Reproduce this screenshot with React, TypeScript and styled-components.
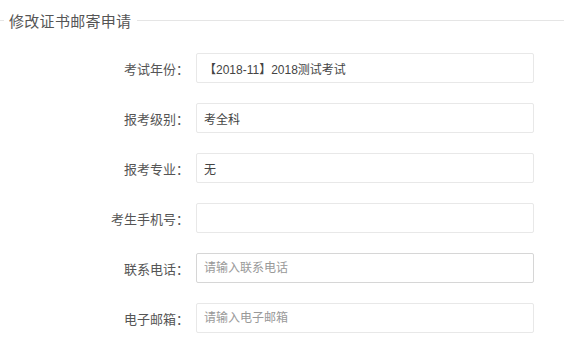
import React from "react";
import styled, { createGlobalStyle } from "styled-components";

const GlobalStyle = createGlobalStyle`
  html, body {
    margin: 0;
    padding: 0;
    background: #fff;
  }
  body {
    font-family: "Liberation Sans", "Noto Sans CJK SC", sans-serif;
    color: #555;
  }
`;

type Field = {
  label: string;
  value?: string;
  placeholder?: string;
  active?: boolean;
};

const FIELDS: Field[] = [
  { label: "考试年份", value: "【2018-11】2018测试考试" },
  { label: "报考级别", value: "考全科" },
  { label: "报考专业", value: "无" },
  { label: "考生手机号", value: "" },
  { label: "联系电话", placeholder: "请输入联系电话", active: true },
  { label: "电子邮箱", placeholder: "请输入电子邮箱" },
];

const App: React.FC = () => {
  return (
    <Page>
      <GlobalStyle />
      <Section>
        <Legend>修改证书邮寄申请</Legend>
        <Form>
          {FIELDS.map((f) => (
            <Row key={f.label}>
              <Label>{f.label}：</Label>
              <Input
                $active={f.active}
                defaultValue={f.value}
                placeholder={f.placeholder}
                readOnly={f.value !== undefined && f.value !== ""}
              />
            </Row>
          ))}
        </Form>
      </Section>
    </Page>
  );
};

const Page = styled.div`
  width: 564px;
  height: 345px;
  overflow: hidden;
  padding-top: 10px;
  box-sizing: border-box;
`;

const Section = styled.fieldset`
  margin: 0;
  padding: 0;
  border: none;
  border-top: 1px solid #e5e5e5;
  width: 600px;
  min-width: 0;
`;

const Legend = styled.legend`
  margin-left: 4px;
  padding: 0 6px 0 5px;
  font-size: 15px;
  letter-spacing: 0.3px;
  line-height: 21px;
  color: #555;
  font-family: "Noto Sans CJK SC", sans-serif;
`;

const Form = styled.div`
  display: flex;
  flex-direction: column;
  gap: 20px;
  padding-top: 22px;
`;

const Row = styled.div`
  display: flex;
  align-items: center;
  height: 30px;
`;

const Label = styled.label`
  flex: 0 0 196px;
  padding-right: 7px;
  box-sizing: border-box;
  text-align: right;
  font-size: 13px;
  color: #555;
  font-family: "Noto Sans CJK SC", sans-serif;
  white-space: nowrap;
`;

const Input = styled.input<{ $active?: boolean }>`
  flex: 0 0 338px;
  width: 338px;
  height: 30px;
  box-sizing: border-box;
  border: 1px solid ${(p) => (p.$active ? "#d6d6d6" : "#e8e8e8")};
  border-radius: 2px;
  padding: 0 7px;
  font-size: 12px;
  color: #444;
  font-family: "Liberation Sans", "Noto Sans CJK SC", sans-serif;
  background: #fff;
  outline: none;

  &::placeholder {
    color: #999;
  }
`;

export default App;
